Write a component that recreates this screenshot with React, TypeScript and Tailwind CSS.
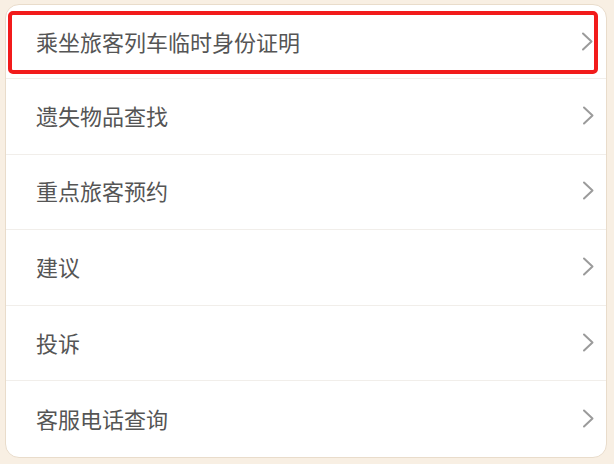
import React from "react";

const items: string[] = [
  "乘坐旅客列车临时身份证明",
  "遗失物品查找",
  "重点旅客预约",
  "建议",
  "投诉",
  "客服电话查询",
];

const Chevron = () => (
  <svg width="12" height="19" viewBox="0 0 12 19" fill="none">
    <path d="M2 1.5 L10.5 9.5 L2 17.5" stroke="#9b9b9b" strokeWidth="2" strokeLinecap="round" strokeLinejoin="round" />
  </svg>
);

export default function App() {
  return (
    <div
      className="w-[614px] h-[464px] bg-[#f8efe3] pt-[4px] pl-[5px] pr-[7px]"
      style={{ fontFamily: '"Noto Sans CJK SC", "Noto Sans", sans-serif' }}
    >
      <div className="bg-white border border-[#e9dccb] rounded-[14px] overflow-hidden">
        {items.map((label, i) =>
          i === 0 ? (
            <div key={label} className="h-[74px] pt-[6px] pl-[2px] pr-[8px] border-b border-[#f1eeea]">
              <div className="h-[63px] border-4 border-[#f21b1b] rounded-[5px] flex items-center justify-between pl-[24px] pr-[1px] pb-[2px]">
                <span className="text-[22px] text-[#555555]">{label}</span>
                <Chevron />
              </div>
            </div>
          ) : (
            <div
              key={label}
              className={`h-[75.6px] flex items-center justify-between pl-[30px] pr-[12px] pb-[2px] ${
                i < items.length - 1 ? "border-b border-[#f1eeea]" : ""
              }`}
            >
              <span className="text-[22px] text-[#555555]">{label}</span>
              <Chevron />
            </div>
          )
        )}
      </div>
    </div>
  );
}
